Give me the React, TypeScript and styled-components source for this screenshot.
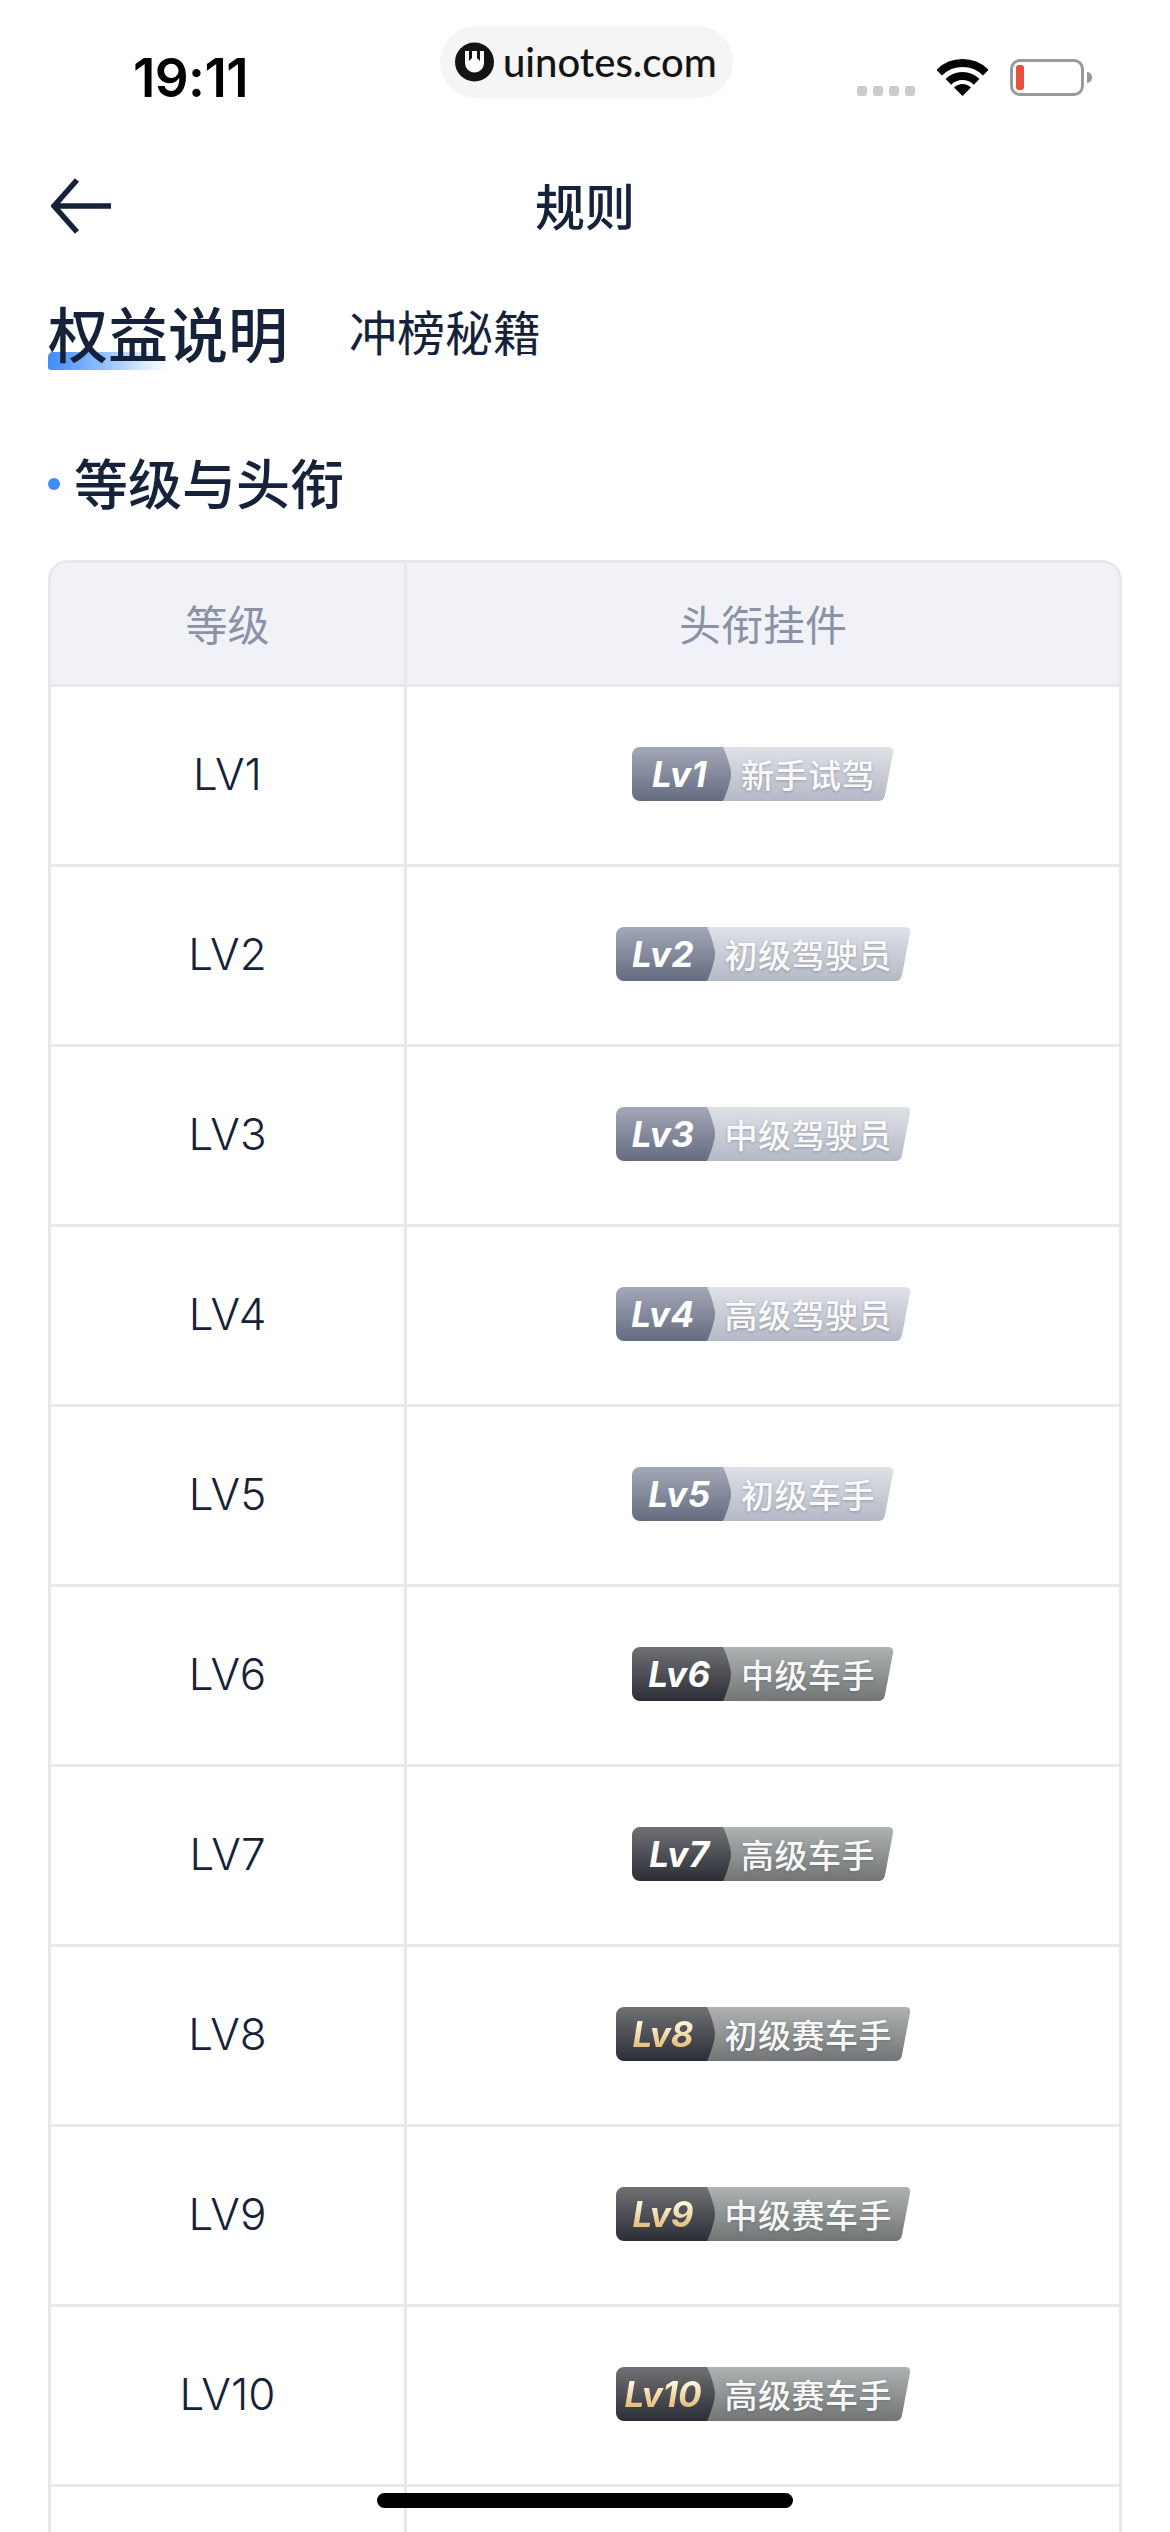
import styled, { createGlobalStyle } from "styled-components"

const colors = {
    ink: "#16223a",
    line: "#e7e8ee",
    headBg: "#f0f2f7",
    headText: "#8b92a5",
    blue: "#3f8cfb",
}

const CJK = `"Noto Sans CJK SC", "Noto Sans", sans-serif`

type Tone = "silver" | "dark"

const LEVELS: { lv: string; title: string; tone: Tone; gold?: boolean }[] = [
    { lv: "1", title: "新手试驾", tone: "silver" },
    { lv: "2", title: "初级驾驶员", tone: "silver" },
    { lv: "3", title: "中级驾驶员", tone: "silver" },
    { lv: "4", title: "高级驾驶员", tone: "silver" },
    { lv: "5", title: "初级车手", tone: "silver" },
    { lv: "6", title: "中级车手", tone: "dark" },
    { lv: "7", title: "高级车手", tone: "dark" },
    { lv: "8", title: "初级赛车手", tone: "dark", gold: true },
    { lv: "9", title: "中级赛车手", tone: "dark", gold: true },
    { lv: "10", title: "高级赛车手", tone: "dark", gold: true },
]

const GlobalStyle = createGlobalStyle`
    html, body {
        margin: 0;
        height: 2532px;
        overflow: hidden;
        background: #fff;
    }
    * { box-sizing: border-box; }
`

const Page = styled.div`
    position: relative;
    width: 1170px;
    height: 2532px;
    overflow: hidden;
    background: #fff;
    color: ${colors.ink};
    font-family: ${CJK};
`

/* Barra de status */
const StatusBar = styled.div`
    position: relative;
    height: 160px;
    padding: 0 86px 0 133px;
    display: flex;
    justify-content: space-between;
    align-items: flex-start;
`

const Time = styled.span`
    margin-top: 49px;
    font-family: "Inter", "Liberation Sans", sans-serif;
    font-size: 53px;
    line-height: 58px;
    font-weight: 600;
    letter-spacing: -0.6px;
    color: #000;
`

const Watermark = styled.div`
    position: absolute;
    left: 440px;
    top: 26px;
    width: 293px;
    height: 72px;
    border-radius: 36px;
    background: #f5f5f5;
    display: flex;
    align-items: center;
    gap: 9px;
    padding: 0 0 0 15px;
    font-family: "Lato", "Inter", sans-serif;
    font-size: 40px;
    font-weight: 500;
    color: #141414;
`

const StatusIcons = styled.div`
    margin-top: 59px;
    display: flex;
    align-items: flex-end;
    gap: 22px;
`

const SignalDots = styled.div`
    display: flex;
    gap: 6px;
    align-self: flex-end;
`

const SignalDot = styled.span`
    width: 10px;
    height: 10px;
    border-radius: 3px;
    background: #cbcbcb;
`

const Battery = styled.div`
    position: relative;
    width: 74px;
    height: 37px;
    border: 3px solid #999;
    border-radius: 10px;
    padding: 3px;

    &::after {
        content: "";
        position: absolute;
        right: -11px;
        top: 10px;
        width: 5px;
        height: 11px;
        border-radius: 0 5px 5px 0;
        background: #999;
    }
`

const BatteryLevel = styled.div`
    width: 8px;
    height: 100%;
    border-radius: 3px;
    background: #e84f3d;
`

/* Navegação */
const NavBar = styled.div`
    position: relative;
    height: 94px;
    padding-bottom: 6px;
    display: flex;
    align-items: center;
    justify-content: center;
`

const BackButton = styled.button`
    position: absolute;
    left: 51px;
    top: 18px;
    padding: 0;
    border: 0;
    background: none;
    display: flex;
`

const NavTitle = styled.h1`
    margin: 0;
    font-size: 50px;
    line-height: 60px;
    font-weight: 500;
`

/* Abas */
const Tabs = styled.div`
    margin-top: 38px;
    padding-left: 48px;
    height: 80px;
    display: flex;
    align-items: center;
    gap: 61px;
`

const Tab = styled.span<{ $active?: boolean }>`
    position: relative;
    z-index: 0;
    font-size: ${(p) => (p.$active ? "60px" : "48px")};
    line-height: 70px;
    font-weight: ${(p) => (p.$active ? 500 : 400)};
    margin-top: ${(p) => (p.$active ? "0" : "-4px")};

    ${(p) =>
        p.$active &&
        `&::after {
            content: "";
            position: absolute;
            z-index: -1;
            left: 0;
            bottom: -3px;
            width: 118px;
            height: 18px;
            border-radius: 5px 0 0 3px;
            background: linear-gradient(90deg, ${colors.blue} 0%, #8fbdfc 45%, rgba(255, 255, 255, 0) 100%);
        }`}
`

/* Seção */
const SectionTitle = styled.h2`
    margin: 70px 0 0;
    padding-left: 48px;
    height: 80px;
    display: flex;
    align-items: center;
    gap: 14px;
    font-size: 54px;
    line-height: 70px;
    font-weight: 500;
`

const Dot = styled.span`
    width: 12px;
    height: 12px;
    border-radius: 50%;
    background: ${colors.blue};
    margin-top: 4px;
`

/* Tabela */
const Table = styled.div`
    margin: 38px 0 0 48px;
    width: 1074px;
    border: 3px solid ${colors.line};
    border-bottom: 0;
    border-radius: 20px 20px 0 0;
    overflow: hidden;
`

const Row = styled.div<{ $head?: boolean }>`
    display: grid;
    grid-template-columns: 353px 1fr;
    height: ${(p) => (p.$head ? "124px" : "180px")};
    background: ${(p) => (p.$head ? colors.headBg : "#fff")};
    color: ${(p) => (p.$head ? colors.headText : colors.ink)};
    border-bottom: 3px solid ${colors.line};
`

const Cell = styled.div`
    display: flex;
    align-items: center;
    justify-content: center;
    padding-bottom: 3px;

    & + & {
        border-left: 3px solid ${colors.line};
    }
`

const HeadText = styled.span`
    font-size: 42px;
    font-weight: 400;
`

const LevelText = styled.span`
    font-family: "Inter", "Liberation Sans", sans-serif;
    font-size: 44px;
    font-weight: 300;
`

/* Selo de nível */
const Badge = styled.div<{ $width: number }>`
    position: relative;
    width: ${(p) => p.$width}px;
    height: 54px;
    display: flex;
    align-items: center;
`

const BadgeShape = styled.svg`
    position: absolute;
    inset: 0;
`

const BadgeLevel = styled.span<{ $gold?: boolean }>`
    position: relative;
    width: 99px;
    padding-right: 4px;
    text-align: center;
    font-family: "Inter", "Liberation Sans", sans-serif;
    font-size: 35px;
    line-height: 54px;
    font-weight: 700;
    font-style: italic;
    letter-spacing: ${(p) => (p.$gold ? "0" : "0.5px")};
    color: ${(p) => (p.$gold ? "transparent" : "#fff")};
    background: ${(p) => (p.$gold ? "linear-gradient(180deg, #fff6dc 30%, #e6c283 70%)" : "none")};
    -webkit-background-clip: ${(p) => (p.$gold ? "text" : "border-box")};
    background-clip: ${(p) => (p.$gold ? "text" : "border-box")};
`

const BadgeTitle = styled.span`
    position: relative;
    margin-left: 10px;
    font-size: 33px;
    line-height: 54px;
    font-weight: 500;
    letter-spacing: 0.5px;
    color: rgba(255, 255, 255, 0.96);
    text-shadow: 0 1px 3px rgba(60, 65, 80, 0.35);
`

const HomeIndicator = styled.div`
    position: absolute;
    left: 377px;
    top: 2493px;
    width: 416px;
    height: 15px;
    border-radius: 8px;
    background: #000;
`

const TONES = {
    silver: { l1: "#a3a8b7", l2: "#656c80", r1: "#dfe1e7", r2: "#b5b9c7" },
    dark: { l1: "#6f7174", l2: "#2c2e37", r1: "#aeb2b2", r2: "#727576" },
}

function BadgeBackground({ width, tone }: { width: number; tone: Tone }) {
    const t = TONES[tone]
    const left = `M8 0H91Q95 8 98 20Q100 27 98 34Q95 46 91 54H8A8 8 0 0 1 0 46V8A8 8 0 0 1 8 0Z`
    const right = `M90 0H${width - 6}Q${width} 0 ${width - 1} 6L${width - 9} 48Q${width - 10} 54 ${width - 16} 54H90L99 27Z`
    return (
        <BadgeShape width={width} height={54} viewBox={`0 0 ${width} 54`}>
            <defs>
                <linearGradient id={`left-${tone}`} x1="0" y1="0" x2="0" y2="1">
                    <stop offset="0" stopColor={t.l1} />
                    <stop offset="1" stopColor={t.l2} />
                </linearGradient>
                <linearGradient id={`right-${tone}`} x1="0" y1="0" x2="0" y2="1">
                    <stop offset="0" stopColor={t.r1} />
                    <stop offset="1" stopColor={t.r2} />
                </linearGradient>
            </defs>
            <path d={right} fill={`url(#right-${tone})`} />
            <path d={left} fill={`url(#left-${tone})`} />
        </BadgeShape>
    )
}

export default function App() {
    return (
        <Page>
            <GlobalStyle />

            <StatusBar>
                <Time>19:11</Time>
                <Watermark>
                    <svg width="39" height="40" viewBox="0 0 39 40">
                        <circle cx="19.5" cy="20" r="19.5" fill="#141414" />
                        <path
                            d="M10 9V21A9.5 9.5 0 0 0 29 21V9H25V19L22 16V9H17V16L14 19V9Z"
                            fill="#fff"
                        />
                    </svg>
                    uinotes.com
                </Watermark>
                <StatusIcons>
                    <SignalDots>
                        <SignalDot />
                        <SignalDot />
                        <SignalDot />
                        <SignalDot />
                    </SignalDots>
                    <svg width="51" height="37" viewBox="0 0 51 37">
                        <path d="M2.2 13.7A33 33 0 0 1 48.8 13.7" fill="none" stroke="#000" strokeWidth="8" />
                        <path d="M11.4 22.9A20 20 0 0 1 39.6 22.9" fill="none" stroke="#000" strokeWidth="8" />
                        <path d="M25.5 37L17 28.5A12 12 0 0 1 34 28.5Z" fill="#000" />
                    </svg>
                    <Battery>
                        <BatteryLevel />
                    </Battery>
                </StatusIcons>
            </StatusBar>

            <NavBar>
                <BackButton>
                    <svg width="62" height="56" viewBox="0 0 62 56">
                        <path
                            d="M60 28H5M26 2L3 28L26 54"
                            fill="none"
                            stroke={colors.ink}
                            strokeWidth="5.5"
                        />
                    </svg>
                </BackButton>
                <NavTitle>规则</NavTitle>
            </NavBar>

            <Tabs>
                <Tab $active>权益说明</Tab>
                <Tab>冲榜秘籍</Tab>
            </Tabs>

            <SectionTitle>
                <Dot />
                等级与头衔
            </SectionTitle>

            <Table>
                <Row $head>
                    <Cell>
                        <HeadText>等级</HeadText>
                    </Cell>
                    <Cell>
                        <HeadText>头衔挂件</HeadText>
                    </Cell>
                </Row>
                {LEVELS.map((item) => {
                    const width = item.title.length > 4 ? 295 : 262
                    return (
                        <Row key={item.lv}>
                            <Cell>
                                <LevelText>LV{item.lv}</LevelText>
                            </Cell>
                            <Cell>
                                <Badge $width={width}>
                                    <BadgeBackground width={width} tone={item.tone} />
                                    <BadgeLevel $gold={item.gold}>Lv{item.lv}</BadgeLevel>
                                    <BadgeTitle>{item.title}</BadgeTitle>
                                </Badge>
                            </Cell>
                        </Row>
                    )
                })}
                <Row>
                    <Cell />
                    <Cell />
                </Row>
            </Table>

            <HomeIndicator />
        </Page>
    )
}
